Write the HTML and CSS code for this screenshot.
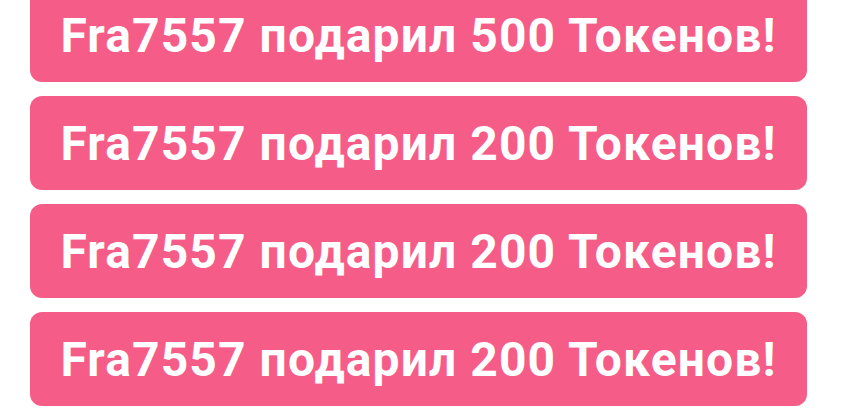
FILE: index.html
```html
<!DOCTYPE html>
<html lang="ru">
<head>
<meta charset="utf-8">
<link rel="stylesheet" href="styles.css">
</head>
<body>
<div class="feed">
  <div class="gift">Fra7557 подарил 500 Токенов!</div>
  <div class="gift">Fra7557 подарил 200 Токенов!</div>
  <div class="gift">Fra7557 подарил 200 Токенов!</div>
  <div class="gift">Fra7557 подарил 200 Токенов!</div>
</div>
</body>
</html>
```

FILE: styles.css
```css
html, body {
  margin: 0;
  padding: 0;
  background: #ffffff;
  overflow: hidden;
}
.feed {
  display: flex;
  flex-direction: column;
  gap: 14px;
  width: 777px;
  margin: -12px 0 0 30px;
}
.gift {
  height: 94px;
  border-radius: 12px;
  background: #f65c88;
  color: #ffffff;
  font-family: "Roboto", "Lato", sans-serif;
  font-weight: 700;
  font-size: 48px;
  letter-spacing: 1.1px;
  display: flex;
  align-items: center;
  justify-content: center;
  white-space: nowrap;
}
```
